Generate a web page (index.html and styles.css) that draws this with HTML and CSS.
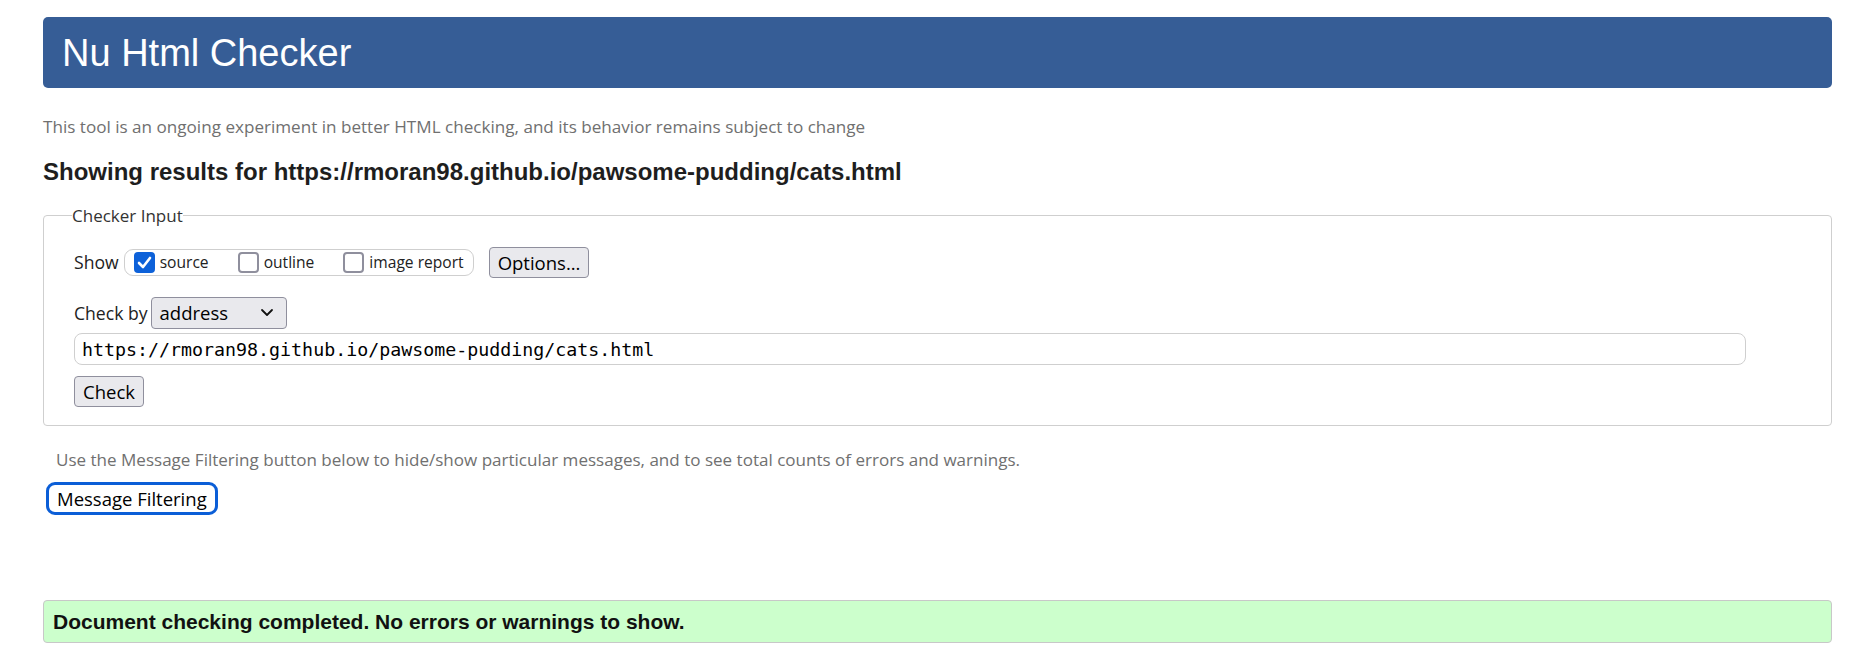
FILE: index.html
```html
<!DOCTYPE html>
<html lang="en">
<head>
<meta charset="utf-8">
<title>Nu Html Checker</title>
<link rel="stylesheet" href="styles.css">
</head>
<body>
<h1 class="banner">Nu Html Checker</h1>
<p class="note">This tool is an ongoing experiment in better HTML checking, and its behavior remains subject to change</p>
<h2 class="results-title">Showing results for https://rmoran98.github.io/pawsome-pudding/cats.html</h2>
<fieldset class="checker">
  <legend class="checker-legend">Checker Input</legend>
  <div class="row show-row">
    <span class="label">Show</span>
    <div class="show-group">
      <label class="opt">
        <span class="cb cb-on"><svg viewBox="0 0 21 21" width="21" height="21"><path d="M5 11 L9 15 L16 6" fill="none" stroke="#fff" stroke-width="2.6" stroke-linecap="round" stroke-linejoin="round"/></svg></span>
        <span class="opt-text">source</span>
      </label>
      <label class="opt">
        <span class="cb"></span>
        <span class="opt-text">outline</span>
      </label>
      <label class="opt">
        <span class="cb"></span>
        <span class="opt-text">image report</span>
      </label>
    </div>
    <button class="btn options-btn" type="button">Options...</button>
  </div>
  <div class="row checkby-row">
    <span class="label">Check by</span>
    <div class="select">
      <span class="select-text">address</span>
      <svg class="chev" viewBox="0 0 14 10" width="14" height="10"><path d="M2 2 L7 7 L12 2" fill="none" stroke="#111" stroke-width="1.8" stroke-linecap="round" stroke-linejoin="round"/></svg>
    </div>
  </div>
  <div class="url-field">https://rmoran98.github.io/pawsome-pudding/cats.html</div>
  <div class="row check-row">
    <button class="btn check-btn" type="button">Check</button>
  </div>
</fieldset>
<p class="note filter-note">Use the Message Filtering button below to hide/show particular messages, and to see total counts of errors and warnings.</p>
<button class="filter-btn" type="button">Message Filtering</button>
<div class="success">Document checking completed. No errors or warnings to show.</div>
</body>
</html>
```
FILE: styles.css
```css
html, body {
  margin: 0;
  background: #fff;
}
body {
  padding: 17px 38px 0 43px;
  font-family: "Open Sans", "Noto Sans", sans-serif;
  color: #222;
}
.banner {
  margin: 0;
  height: 71px;
  line-height: 72px;
  padding-left: 19px;
  background: #365d96;
  color: #fff;
  border-radius: 5px;
  font-family: "Liberation Sans", Arial, sans-serif;
  font-weight: normal;
  font-size: 38px;
}
.note {
  margin: 27px 0 0;
  font-size: 17.1px;
  line-height: 24px;
  color: #707070;
}
.results-title {
  margin: 21px 0 0;
  font-family: "Liberation Sans", Arial, sans-serif;
  font-weight: bold;
  font-size: 24px;
  line-height: 23.5px;
  color: #1e1e1e;
}
.checker {
  margin: 20px 0 0;
  padding: 19px 0 18px 30px;
  border: 1px solid #cfcfcf;
  border-radius: 4px;
  min-width: 0;
}
.checker-legend {
  padding: 0;
  margin-left: -2px;
  font-size: 17px;
  line-height: 24px;
  color: #333;
}
.row {
  display: flex;
  align-items: center;
}
.label {
  font-size: 17.6px;
  color: #222;
}
.show-row {
  height: 31px;
}
.show-group {
  display: flex;
  align-items: center;
  gap: 29px;
  height: 25px;
  margin-left: 5px;
  padding: 0 9px;
  border: 1px solid #cfcfcf;
  border-radius: 9px;
}
.opt {
  display: flex;
  align-items: center;
  gap: 5px;
}
.opt-text {
  font-size: 15.6px;
  color: #222;
}
.cb {
  box-sizing: border-box;
  width: 21px;
  height: 21px;
  border: 2px solid #8f8f9d;
  border-radius: 4px;
  background: #fff;
  display: flex;
}
.cb-on {
  border: none;
  background: #0d61d9;
}
.btn {
  box-sizing: border-box;
  height: 31px;
  padding: 0 8px;
  background: #e9e9ed;
  border: 1px solid #8f8f9d;
  border-radius: 4px;
  font-family: "Open Sans", "Noto Sans", sans-serif;
  font-size: 18.5px;
  color: #000;
  line-height: 29px;
}
.options-btn {
  margin-left: 15px;
}
.checkby-row {
  margin-top: 19px;
  height: 32px;
}
.select {
  box-sizing: border-box;
  display: flex;
  align-items: center;
  justify-content: space-between;
  width: 136px;
  height: 32px;
  margin-left: 3px;
  padding: 0 12px 0 8px;
  background: #e9e9ed;
  border: 1px solid #8f8f9d;
  border-radius: 4px;
}
.select-text {
  font-size: 18.5px;
  color: #000;
}
.url-field {
  box-sizing: border-box;
  margin-top: 4px;
  width: 1672px;
  height: 32px;
  padding: 0 7px;
  border: 1px solid #cfcfcf;
  border-radius: 8px;
  font-family: "DejaVu Sans Mono", "Liberation Mono", monospace;
  font-size: 18.3px;
  line-height: 31px;
  color: #000;
}
.check-row {
  margin-top: 11px;
}
.filter-note {
  margin: 22px 0 0 13px;
  font-size: 17.05px;
}
.filter-btn {
  display: block;
  box-sizing: border-box;
  margin: 10px 0 0 3px;
  height: 33px;
  padding: 0 8px;
  background: #fff;
  border: 3px solid #0b5ed7;
  border-radius: 9px;
  font-family: "Open Sans", "Noto Sans", sans-serif;
  font-size: 18.5px;
  line-height: 27px;
  color: #000;
}
.success {
  margin-top: 85px;
  box-sizing: border-box;
  height: 43px;
  padding: 9px 9px 0;
  background: #ccffcc;
  border: 1px solid #c8c8c8;
  border-radius: 4px;
  font-family: "Liberation Sans", Arial, sans-serif;
  font-weight: bold;
  font-size: 21px;
  color: #111;
}
```
